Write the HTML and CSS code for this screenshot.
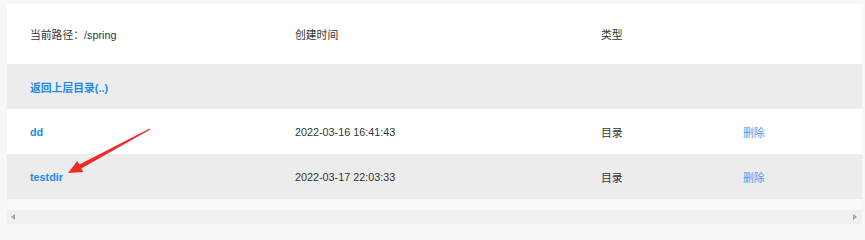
FILE: index.html
```html
<!DOCTYPE html>
<html lang="zh">
<head>
<meta charset="utf-8">
<link rel="stylesheet" href="styles.css">
</head>
<body>
<div class="page">
  <div class="card">
    <div class="row head">
      <div>当前路径：/spring</div>
      <div>创建时间</div>
      <div>类型</div>
      <div></div>
    </div>
    <div class="row gray">
      <div><a class="name">返回上层目录(..)</a></div>
      <div></div><div></div><div></div>
    </div>
    <div class="row">
      <div><a class="name">dd</a></div>
      <div>2022-03-16 16:41:43</div>
      <div>目录</div>
      <div><a class="del">删除</a></div>
    </div>
    <div class="row gray">
      <div><a class="name">testdir</a></div>
      <div>2022-03-17 22:03:33</div>
      <div>目录</div>
      <div><a class="del">删除</a></div>
    </div>
    <div class="spacer"></div>
    <div class="scrollbar">
      <span class="arr left"></span>
      <span class="arr right"></span>
    </div>
  </div>
  <svg class="annot" width="865" height="230" viewBox="0 0 865 230">
    <polygon fill="#ee2a24" points="150.3,129.5 149.7,128.5 79.4,164.4 77.3,160.9 68,173 83.3,171.9 81.2,168.4"/>
  </svg>
</div>
</body>
</html>
```
FILE: styles.css
```css
html, body {
  margin: 0;
  padding: 0;
}
body {
  background: #f7f7f7;
  font-family: "Liberation Sans", Arial, "Noto Sans CJK SC", sans-serif;
  font-size: 10.8px;
  color: #333;
  overflow: hidden;
}
.page {
  position: relative;
  width: 865px;
  height: 230px;
  padding: 4px 0 0 7px;
  box-sizing: border-box;
}
.card {
  width: 855px;
  background: #fff;
}
.row {
  display: grid;
  grid-template-columns: 265px 306px 142px 1fr;
  align-items: center;
  padding-left: 23px;
  height: 45px;
  background: #fff;
}
.row.head {
  height: 60px;
}
.row.gray {
  background: #ececec;
}
.name {
  color: #1e88f0;
  font-weight: bold;
}
.del {
  color: #4a9cf6;
}
.spacer {
  height: 11px;
  background: #f9f9f9;
}
.scrollbar {
  position: relative;
  height: 14px;
  background: #f0f0f0;
}
.arr {
  position: absolute;
  top: 4px;
  width: 0;
  height: 0;
  border-top: 3px solid transparent;
  border-bottom: 3px solid transparent;
}
.arr.left {
  left: 4px;
  border-right: 4px solid #a3a3a3;
}
.arr.right {
  right: 5px;
  border-left: 4px solid #a3a3a3;
}
.annot {
  position: absolute;
  left: 0;
  top: 0;
  pointer-events: none;
}
```
